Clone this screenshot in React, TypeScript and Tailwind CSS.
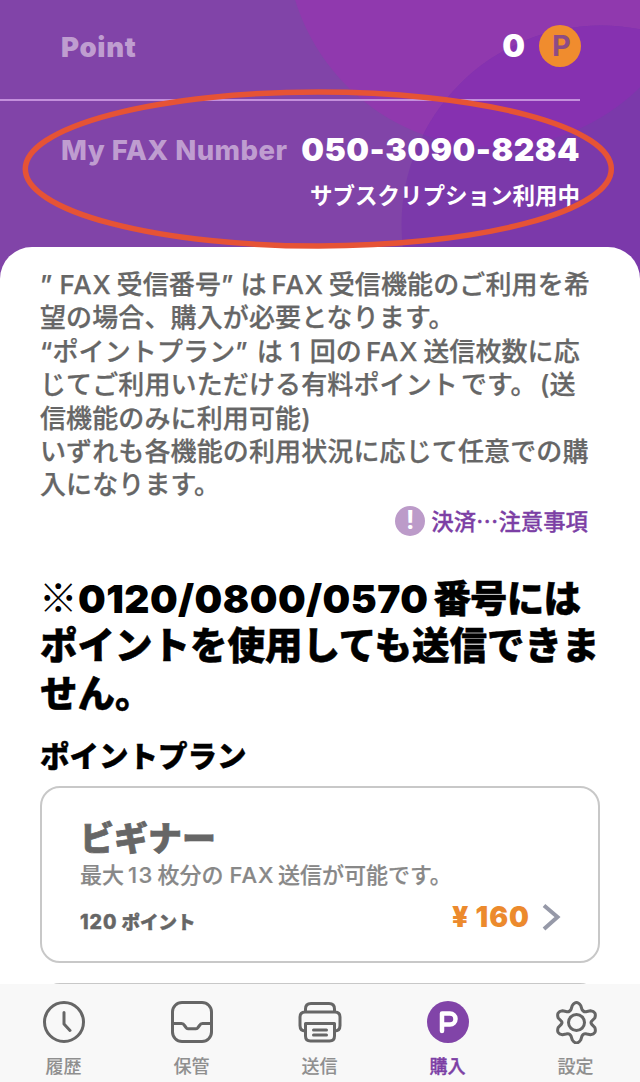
import type { ReactNode } from "react";

function Fax({ className }: { className?: string }) {
  return <span className={`-mr-[3px] tracking-[0.9px] ${className ?? ""}`}>FAX </span>;
}

function HeaderBackground() {
  return (
    <svg className="absolute inset-0" width="640" height="300" viewBox="0 0 640 300">
      <defs>
        <clipPath id="upper">
          <circle cx="494" cy="-61" r="208" />
        </clipPath>
      </defs>
      <circle cx="494" cy="-61" r="208" fill="#9039ae" />
      <circle cx="601" cy="225" r="199.500" fill="#7b39aa" />
      <circle cx="601" cy="225" r="199.500" fill="#8631b0" clipPath="url(#upper)" />
    </svg>
  );
}

function Header() {
  return (
    <header className="relative h-[300px] bg-[#8144a8] text-white">
      <HeaderBackground />
      <div className="relative">
        <div className="mr-[60px] flex h-[101px] items-start justify-between border-b-2 border-[#c38fdc] pl-[61px]">
          <span className="mt-[27px] text-[27.500px] leading-10 font-black tracking-[0.7px] text-[#bf9dd0]">Point</span>
          <div className="mt-[25px] -mr-px flex items-center">
            <span className="mr-[14px] text-[32px] leading-[42px] font-black">0</span>
            <span className="flex size-[42px] items-center justify-center rounded-full bg-[#f08c2e] pl-[3px] text-[29px] font-bold text-[#8d4c86]">P</span>
          </div>
        </div>
        <div className="mr-[60px] flex items-center justify-between pt-[28px] pl-[61px] leading-[42px] whitespace-nowrap">
          <span className="text-[27.500px] font-extrabold tracking-[0.45px] text-[#bf9dd0]">My FAX Number</span>
          <span className="text-[32px] font-black tracking-[0.5px]">050-3090-8284</span>
        </div>
        <p className="mt-[9px] mr-[60px] text-right text-[22.500px] leading-[32px] font-bold">サブスクリプション利用中</p>
      </div>
    </header>
  );
}

function Description() {
  return (
    <div className="text-[26px] leading-[33.400px] font-medium tracking-[0.12px] whitespace-nowrap text-[#666] [-webkit-text-stroke:0.25px_#666]">
      <p>
        ” <Fax />受信番号” は<Fax className="ml-[5px]" />受信機能のご利用を希
      </p>
      <p>望の場合、購入が必要となります。</p>
      <p>
        “ポイントプラン” <span className="ml-[2px]">は</span>
        <span className="mr-[9px] ml-[7px]">1</span>回の<Fax className="ml-[4px]" />送信枚数に応
      </p>
      <p>
        じてご利用いただける有料ポイント<span className="ml-[3px]">です。</span>
        <span className="ml-[3px]">(送</span>
      </p>
      <p>信機能のみに利用可能)</p>
      <p>いずれも各機能の利用状況に応じて任意での購</p>
      <p>入になります。</p>
    </div>
  );
}

function PlanCard() {
  return (
    <section className="mt-[10px] h-[177px] w-[560px] rounded-[20px] border-2 border-[#c8c8c8] pr-[36px] pl-[38px] text-[#666]">
      <h3 className="mt-[30px] text-[34px] leading-[42px] font-black [-webkit-text-stroke:0.7px_#666]">ビギナー</h3>
      <p className="-mt-px text-[22px] leading-[32px] font-medium whitespace-nowrap text-[#888] [-webkit-text-stroke:0.2px_#888]">
        最大<span className="mx-[4px] tracking-[1.300px]">13</span>枚分の<Fax className="ml-[6px]" />送信が可能です。
      </p>
      <div className="mt-[6px] flex items-center justify-between">
        <span className="mt-[11px] flex text-[18.500px] leading-7 font-extrabold [-webkit-text-stroke:0.4px_#666]">
          <span className="mr-[4px] text-[19.500px] tracking-[1px]">120</span>ポイント
        </span>
        <div className="flex items-center">
          <span className="mr-[7px] text-[28px] leading-9 font-black text-[#ec8a2d]">¥</span>
          <span className="text-[28px] leading-9 font-black tracking-[1px] text-[#ec8a2d]">160</span>
          <svg className="ml-[10px]" width="22" height="30" viewBox="0 0 22 30" fill="none" stroke="#9699a8" strokeWidth="4">
            <path d="M4 3.500 17.500 15 4 27" />
          </svg>
        </div>
      </div>
    </section>
  );
}

function Tab({ label, active, children }: { label: string; active?: boolean; children: ReactNode }) {
  return (
    <div className="flex w-32 flex-col items-center pt-[16px]">
      <svg width="44" height="44" viewBox="0 0 44 44" fill="none" stroke="#666" strokeWidth="3" strokeLinecap="round" strokeLinejoin="round">
        {children}
      </svg>
      <span className={`mt-[9px] mr-px text-[18px] leading-7 font-medium ${active ? "text-[#7c3fa5] [-webkit-text-stroke:0.4px_#7c3fa5]" : "text-[#8f8f8f] [-webkit-text-stroke:0.1px_#8f8f8f]"}`}>
        {label}
      </span>
    </div>
  );
}

function TabBar() {
  return (
    <nav className="absolute inset-x-0 bottom-0 flex h-[98px] bg-[#f8f8f8]">
      <Tab label="履歴">
        <circle cx="22" cy="22" r="19.500" />
        <path d="M22 12.500V24l6 6.500" />
      </Tab>
      <Tab label="保管">
        <rect x="2.500" y="2.500" width="39" height="39" rx="9.500" />
        <path d="M3 23.500h8.500q2 0 3 2l1.500 2q.7 1.300 2 1.300h8q1.300 0 2-1.300l1.500-2q1-2 3-2H41" />
      </Tab>
      <Tab label="送信">
        <path d="M7.500 12V9q0-5.500 5.500-5.500h18q5.500 0 5.500 5.500v3M7.500 31Q2 31 2 25.500V17q0-5 5-5h30q5 0 5 5v8.500Q42 31 36.500 31" />
        <path d="M7.500 23.500h29V36q0 5-5 5h-19q-5 0-5-5zM15.500 30h13M15.500 35h13" />
      </Tab>
      <Tab label="購入" active>
        <circle cx="22" cy="22" r="21" fill="#8144a8" stroke="none" />
        <path d="M16 31V13.500h8a5.500 5.500 0 0 1 0 11h-8" stroke="#fff" strokeWidth="4.500" />
      </Tab>
      <Tab label="設定">
        <circle cx="22.500" cy="22.500" r="8" />
        <path d="M18.300 5.500q4.200-6 8.400 0l1.300 4q1.500 3 5 2l3.500-.7q6.500.7 4.300 7.200l-3 3q-1.500 1.700 0 3.400l3 3.100q2.200 6.500-4.300 7.200l-3.500-.7q-3.500-1-5 2l-1.300 4q-4.200 6-8.400 0l-1.300-4q-1.500-3-5-2l-3.500.7Q2 34 4.200 27.500l3-3.100q1.500-1.700 0-3.400l-3-3Q2 11.500 8.500 10.800l3.500.7q3.500 1 5-2z" />
      </Tab>
    </nav>
  );
}

export default function App() {
  return (
    <div className="relative h-[1082px] w-[640px] overflow-hidden bg-white font-['Inter','Noto_Sans_CJK_JP',sans-serif]">
      <Header />
      <main className="relative -mt-[53px] h-[835px] rounded-t-[32px] bg-white px-10 pt-[21px]">
        <Description />
        <div className="-mt-px mr-[12px] flex h-[40px] items-center justify-end gap-[6px]">
          <span className="flex size-[30px] items-center justify-center rounded-full bg-[#bc9bc9] text-[25px] font-bold text-white">!</span>
          <span className="-mt-px font-['Noto_Sans_CJK_JP',sans-serif] text-[22.400px] font-medium text-[#7c3fa5] [-webkit-text-stroke:0.3px_#7c3fa5]">
            決済…注意事項
          </span>
        </div>
        <h1 className="mt-[34px] text-[37.500px] leading-[47.500px] font-extrabold whitespace-nowrap text-black [-webkit-text-stroke:0.5px_#000]">
          <span className="flex h-[47.500px]">
            <span className="-mt-[3px] -ml-px w-[39px] font-['Noto_Sans_CJK_JP',sans-serif] text-[38.500px] font-light [-webkit-text-stroke:0px]">※</span>
            <span className="mr-[5px] text-[39px] font-black tracking-[0.45px] [-webkit-text-stroke:0px]">0120/0800/0570</span>
            <span className="tracking-[-0.8px]">番号には</span>
          </span>
          <span className="block">ポイントを使用しても送信できま</span>
          <span className="block">せん。</span>
        </h1>
        <h2 className="mt-[19px] text-[29.500px] leading-[40px] font-extrabold text-black [-webkit-text-stroke:0.4px_#000]">ポイントプラン</h2>
        <PlanCard />
        <section className="mt-[20px] h-[177px] w-[560px] rounded-[20px] border-2 border-[#c8c8c8]" />
      </main>
      {/* highlight around the fax number */}
      <svg className="absolute top-0 left-0" width="640" height="260" viewBox="0 0 640 260" fill="none">
        <ellipse cx="318.300" cy="169" rx="293" ry="77" stroke="#e65335" strokeWidth="5.500" />
      </svg>
      <TabBar />
    </div>
  );
}
